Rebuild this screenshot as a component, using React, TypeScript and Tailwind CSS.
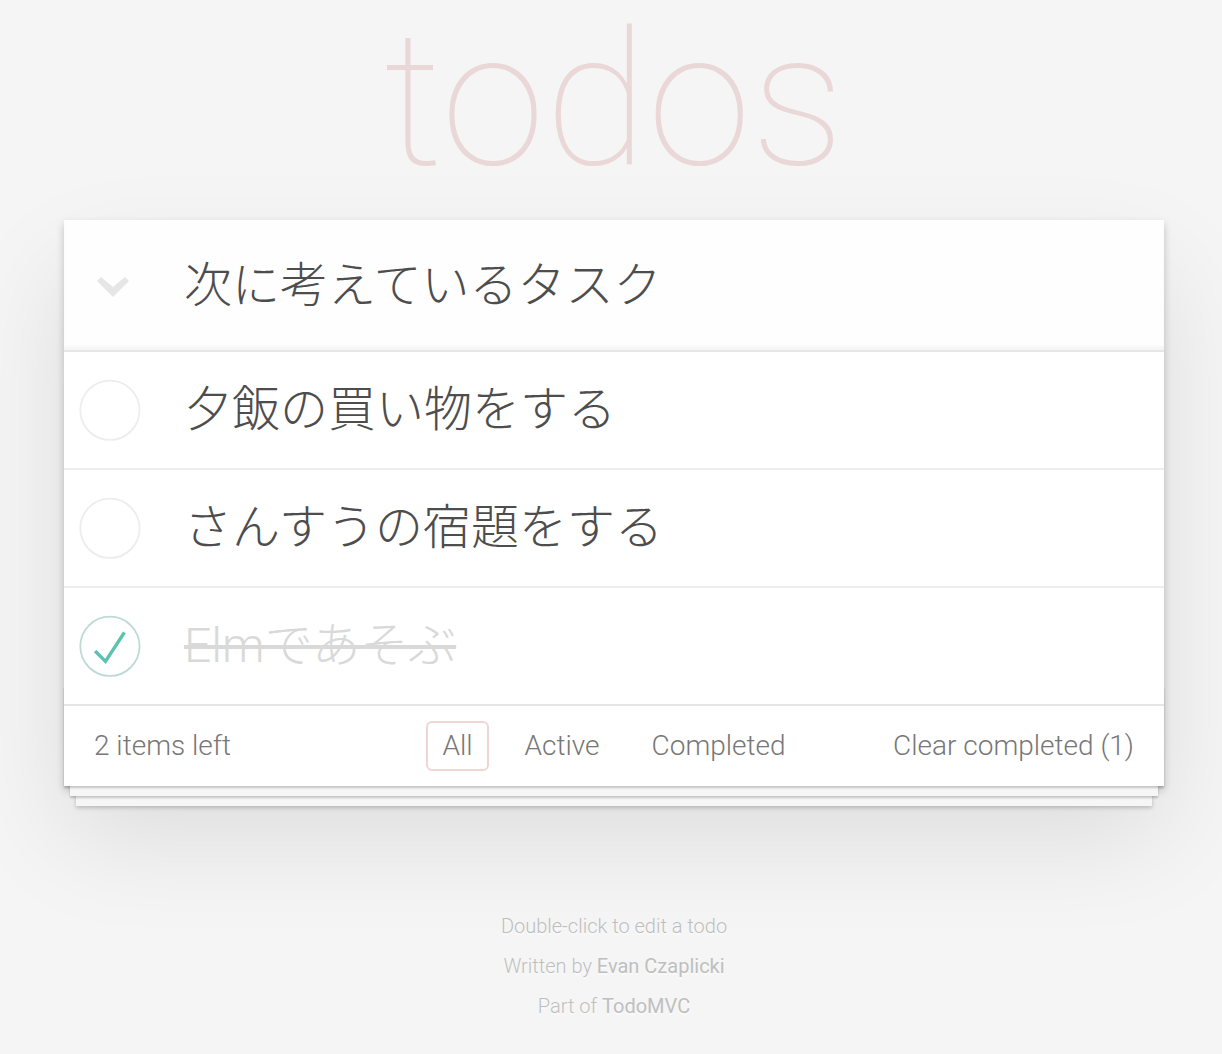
import { useState } from "react";

type Todo = { id: number; title: string; completed: boolean };

const initialTodos: Todo[] = [
  { id: 1, title: "夕飯の買い物をする", completed: false },
  { id: 2, title: "さんすうの宿題をする", completed: false },
  { id: 3, title: "Elmであそぶ", completed: true },
];

function ToggleIcon({ checked }: { checked: boolean }) {
  return (
    <svg width="80" height="80" viewBox="-10 -18 100 135" className="shrink-0">
      <circle cx="50" cy="50" r="50" fill="none" stroke={checked ? "#bddad5" : "#ededed"} strokeWidth="3" />
      {checked && <path fill="#5dc2af" d="M72 25L42 71 27 56l-4 4 20 20 34-52z" />}
    </svg>
  );
}

export default function App() {
  const [todos, setTodos] = useState(initialTodos);
  const [draft, setDraft] = useState("次に考えているタスク");
  const left = todos.filter((t) => !t.completed).length;
  const done = todos.length - left;

  const toggle = (id: number) =>
    setTodos((list) => list.map((t) => (t.id === id ? { ...t, completed: !t.completed } : t)));

  return (
    <div className="min-h-screen bg-[#f5f5f5] font-['Roboto','Noto_Sans_CJK_JP',sans-serif] font-light text-[#4d4d4d]">
      <div className="ml-[64px] flex w-[1100px] flex-col">
        <h1 className="h-[201px] text-center text-[188px] font-thin leading-[201px] text-[rgba(175,47,47,0.15)]">
          todos
        </h1>

        <section className="relative mt-[19px] bg-white shadow-[0_4px_8px_0_rgba(0,0,0,0.2),0_50px_100px_0_rgba(0,0,0,0.1)]">
          <header className="flex h-[130px] items-center bg-[rgba(0,0,0,0.003)] shadow-[inset_0_-4px_2px_rgba(0,0,0,0.03)]">
            <span className="flex w-[120px] shrink-0 pl-[33px] pt-[4px]">
              <svg width="32" height="20" viewBox="0 0 32 20">
                <polygon points="0,4 4,0 16,10 28,0 32,4 16,20" fill="#e6e6e6" />
              </svg>
            </span>
            <input
              value={draft}
              onChange={(e) => setDraft(e.target.value)}
              className="h-full flex-1 bg-transparent pb-[8px] pr-[32px] text-[48px] text-[#4d4d4d] outline-none"
            />
          </header>

          <ul className="border-t-2 border-[#e6e6e6]">
            {todos.map((todo, i) => (
              <li
                key={todo.id}
                className={
                  i < todos.length - 1
                    ? "flex items-center border-b-2 border-[#ededed]"
                    : "flex items-center"
                }
              >
                <button onClick={() => toggle(todo.id)} className="flex w-[80px] shrink-0">
                  <ToggleIcon checked={todo.completed} />
                </button>
                <label
                  className={
                    todo.completed
                      ? "block flex-1 py-[30px] pl-[40px] pr-[120px] text-[48px] leading-[56px] whitespace-pre text-[#d9d9d9] line-through"
                      : "block flex-1 py-[30px] pl-[40px] pr-[120px] text-[48px] leading-[56px] whitespace-pre"
                  }
                >
                  {todo.title}
                </label>
              </li>
            ))}
          </ul>

          <footer className="relative grid grid-cols-[1fr_auto_1fr] items-center border-t-2 border-[#e6e6e6] px-[30px] py-[20px] text-[28px] leading-[40px] text-[#777]">
            <div className="pointer-events-none absolute inset-x-0 bottom-0 h-[100px] shadow-[0_2px_2px_rgba(0,0,0,0.2),0_16px_0_-6px_#f6f6f6,0_18px_2px_-6px_rgba(0,0,0,0.2),0_32px_0_-12px_#f6f6f6,0_34px_4px_-12px_rgba(0,0,0,0.2)]" />
            <span className="relative justify-self-start">
              <strong className="font-light">{left}</strong> items left
            </span>
            <ul className="relative flex gap-[8px]">
              <li>
                <a className="-my-[5px] mx-[6px] block rounded-[6px] border-2 border-[rgba(175,47,47,0.2)] px-[14px] py-[3px]">
                  All
                </a>
              </li>
              <li>
                <a className="-my-[5px] mx-[6px] block rounded-[6px] border-2 border-transparent px-[14px] py-[3px]">
                  Active
                </a>
              </li>
              <li>
                <a className="-my-[5px] mx-[6px] block rounded-[6px] border-2 border-transparent px-[14px] py-[3px]">
                  Completed
                </a>
              </li>
            </ul>
            <button
              onClick={() => setTodos((list) => list.filter((t) => !t.completed))}
              className="relative justify-self-end leading-[40px]"
            >
              Clear completed ({done})
            </button>
          </footer>
        </section>

        <footer className="mt-[130px] flex flex-col gap-[20px] text-center text-[20px] leading-[20px] text-[#bfbfbf] [text-shadow:0_2px_0_rgba(255,255,255,0.5)]">
          <p>Double-click to edit a todo</p>
          <p>
            Written by <a className="font-normal">Evan Czaplicki</a>
          </p>
          <p>
            Part of <a className="font-normal">TodoMVC</a>
          </p>
        </footer>
      </div>
    </div>
  );
}
